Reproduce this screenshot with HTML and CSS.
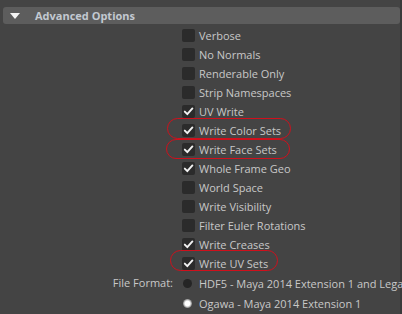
FILE: index.html
```html
<!DOCTYPE html>
<html lang="en">
<head>
    <meta charset="UTF-8">
    <meta name="viewport" content="width=device-width, initial-scale=1.0">
    <title>Advanced Options</title>
    <link rel="stylesheet" href="styles.css">
</head>
<body>
    <div class="panel">
        <div class="frame-header">
            <span class="arrow"></span>
            <span class="frame-title">Advanced Options</span>
        </div>
        <div class="options">
            <label class="row"><span class="box"></span>Verbose</label>
            <label class="row"><span class="box"></span>No Normals</label>
            <label class="row"><span class="box"></span>Renderable Only</label>
            <label class="row"><span class="box"></span>Strip Namespaces</label>
            <label class="row"><span class="box checked"></span>UV Write</label>
            <label class="row marked mark-color"><span class="box checked"></span>Write Color Sets</label>
            <label class="row marked mark-face"><span class="box checked"></span>Write Face Sets</label>
            <label class="row"><span class="box checked"></span>Whole Frame Geo</label>
            <label class="row"><span class="box"></span>World Space</label>
            <label class="row"><span class="box"></span>Write Visibility</label>
            <label class="row"><span class="box"></span>Filter Euler Rotations</label>
            <label class="row"><span class="box checked"></span>Write Creases</label>
            <label class="row marked mark-uv"><span class="box checked"></span>Write UV Sets</label>
            <div class="radio-group">
                <span class="group-label">File Format:</span>
                <div class="radios">
                    <label class="radio-row"><span class="radio"></span>HDF5 - Maya 2014 Extension 1 and Legacy</label>
                    <label class="radio-row"><span class="radio on"></span>Ogawa - Maya 2014 Extension 1</label>
                </div>
            </div>
        </div>
    </div>

    <script>
        // draw the tick in every checked box
        document.querySelectorAll('.box.checked').forEach(function(box) {
            box.innerHTML = '<svg width="13" height="13" viewBox="0 0 13 13"><path d="M2.8 6.6 L5.3 9.2 L10.4 3.4" fill="none" stroke="#f2f2f2" stroke-width="1.9" stroke-linecap="round" stroke-linejoin="round"/></svg>';
        });
    </script>
</body>
</html>
```

FILE: styles.css
```css
body {
    margin: 0;
    background-color: #3c3c3c;
    font-family: "Open Sans", "Noto Sans", sans-serif;
    font-size: 11px;
    color: #c8c8c8;
    overflow: hidden;
}
.panel {
    height: 314px;
    padding-top: 7px;
    box-sizing: border-box;
    background-color: #444444;
    border-right: 2px solid #3a3a3a;
    width: 402px;
}
.frame-header {
    margin-left: 3px;
    width: 397px;
    height: 17px;
    background-color: #5d5d5d;
    border-radius: 3px;
    display: flex;
    align-items: center;
}
.arrow {
    width: 0;
    height: 0;
    margin-left: 7px;
    border-left: 5.5px solid transparent;
    border-right: 5.5px solid transparent;
    border-top: 6px solid #f4f4f4;
}
.frame-title {
    margin-left: 15px;
    font-weight: bold;
    color: #c3c9d1;
}
.options {
    padding-top: 2px;
    padding-left: 182px;
}
.row {
    display: flex;
    align-items: center;
    height: 19px;
    position: relative;
    white-space: nowrap;
}
.box {
    width: 13px;
    height: 13px;
    border-radius: 2px;
    background-color: #2b2b2b;
    margin-right: 4px;
    flex-shrink: 0;
}
.box svg {
    display: block;
}
.marked::before {
    content: "";
    position: absolute;
    border: 1.5px solid #d0101c;
    border-radius: 11px;
}
.mark-color::before {
    left: -15px;
    top: -3px;
    width: 122px;
    height: 19px;
}
.mark-face::before {
    left: -16px;
    top: -1px;
    width: 122px;
    height: 18px;
}
.mark-uv::before {
    left: -12px;
    top: -4px;
    width: 106px;
    height: 19px;
}
.radio-group {
    display: flex;
    margin-left: -182px;
}
.group-label {
    width: 182px;
    text-align: right;
    height: 20px;
    line-height: 20px;
    padding-right: 9px;
    box-sizing: border-box;
    flex-shrink: 0;
}
.radio-row {
    display: flex;
    align-items: center;
    height: 20px;
    white-space: nowrap;
}
.radio {
    width: 9px;
    height: 9px;
    border-radius: 50%;
    background-color: #252525;
    margin-left: 1px;
    margin-right: 7px;
    flex-shrink: 0;
}
.radio.on {
    background: radial-gradient(circle, #ffffff 0, #ffffff 2.5px, #bdbdbd 3.5px, #8a8a8a 4.5px);
}
```
